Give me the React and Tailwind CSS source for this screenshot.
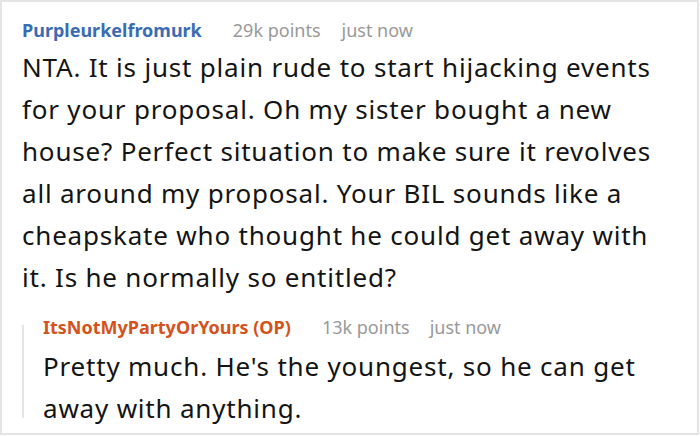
export default function App() {
  return (
    <div className="w-[699px] h-[435px] bg-white border-2 border-[#e4e4e4] overflow-hidden font-['Noto_Sans','Open_Sans',sans-serif]">
      <div className="pl-[20px] pt-[14px] pr-[32px]">
        <div className="flex items-baseline text-[18px] leading-[28px] whitespace-nowrap">
          <span className="font-bold text-[#3a6cb4]">Purpleurkelfromurk</span>
          <span className="ml-[31px] text-[#999999]">29k points</span>
          <span className="ml-[21px] text-[#999999]">just now</span>
        </div>
        <p className="mt-[2px] text-[26px] leading-[42px] tracking-[0.8px] text-[#141414]">
          NTA. It is just plain rude to start hijacking events for your proposal. Oh my sister bought a new house? Perfect situation to make sure it revolves all around my proposal. Your BIL sounds like a cheapskate who thought he could get away with it. Is he normally so entitled?
        </p>
        <div className="mt-[15px] flex">
          <div className="w-[2px] shrink-0 bg-[#e4e4e4] mt-[12px] mb-[11px]"></div>
          <div className="pl-[19px]">
            <div className="flex items-baseline text-[18px] leading-[28px] whitespace-nowrap">
              <span className="font-bold text-[#d4521c]">ItsNotMyPartyOrYours (OP)</span>
              <span className="ml-[31px] text-[#999999]">13k points</span>
              <span className="ml-[20px] text-[#999999]">just now</span>
            </div>
            <p className="mt-[4px] text-[26px] leading-[42px] tracking-[0.8px] text-[#141414]">
              Pretty much. He's the youngest, so he can get away with anything.
            </p>
          </div>
        </div>
      </div>
    </div>
  );
}
